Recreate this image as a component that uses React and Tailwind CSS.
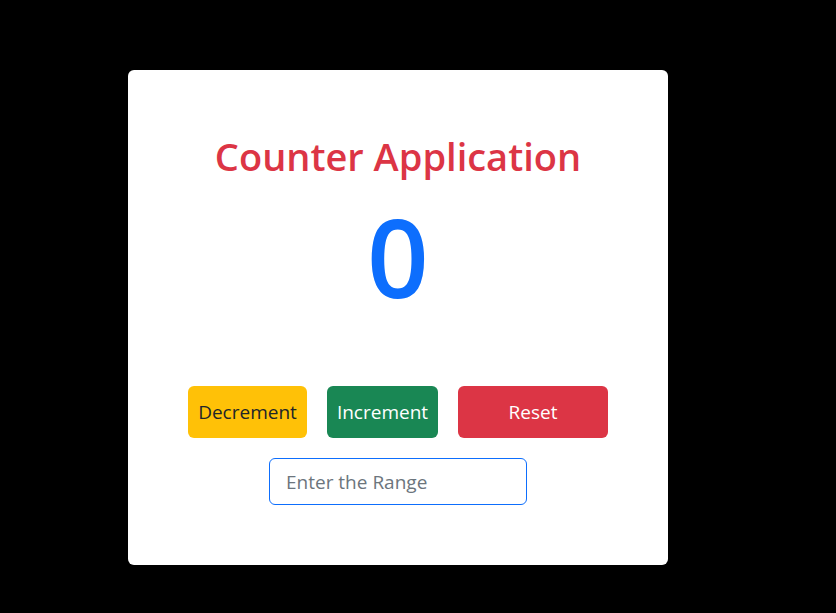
export default function App() {
  return (
    <div className="min-h-screen w-full bg-black pt-[70px] pl-[128px]" style={{ fontFamily: '"Open Sans", "Noto Sans", sans-serif' }}>
      <div className="w-[540px] h-[495px] bg-white rounded-[6px] flex flex-col items-center pt-[62px]">
        <h1 className="text-[38px] leading-[48px] font-semibold text-[#dc3545]">Counter Application</h1>
        <div className="mt-[11px] text-[108px] leading-[132px] font-semibold text-[#0d6efd]">0</div>
        <div className="mt-[63px] flex gap-[20px]">
          <button className="w-[119px] h-[52px] rounded-[6px] bg-[#ffc107] text-[#212529] text-[19px]">Decrement</button>
          <button className="w-[111px] h-[52px] rounded-[6px] bg-[#198754] text-white text-[19px] font-medium">Increment</button>
          <button className="w-[150px] h-[52px] rounded-[6px] bg-[#dc3545] text-white text-[19px] font-medium">Reset</button>
        </div>
        <input
          type="text"
          placeholder="Enter the Range"
          className="mt-[20px] w-[258px] h-[47px] rounded-[6px] border border-[#0d6efd] px-[16px] text-[19px] text-[#212529] placeholder:text-[#6c757d] outline-none"
        />
      </div>
    </div>
  );
}
